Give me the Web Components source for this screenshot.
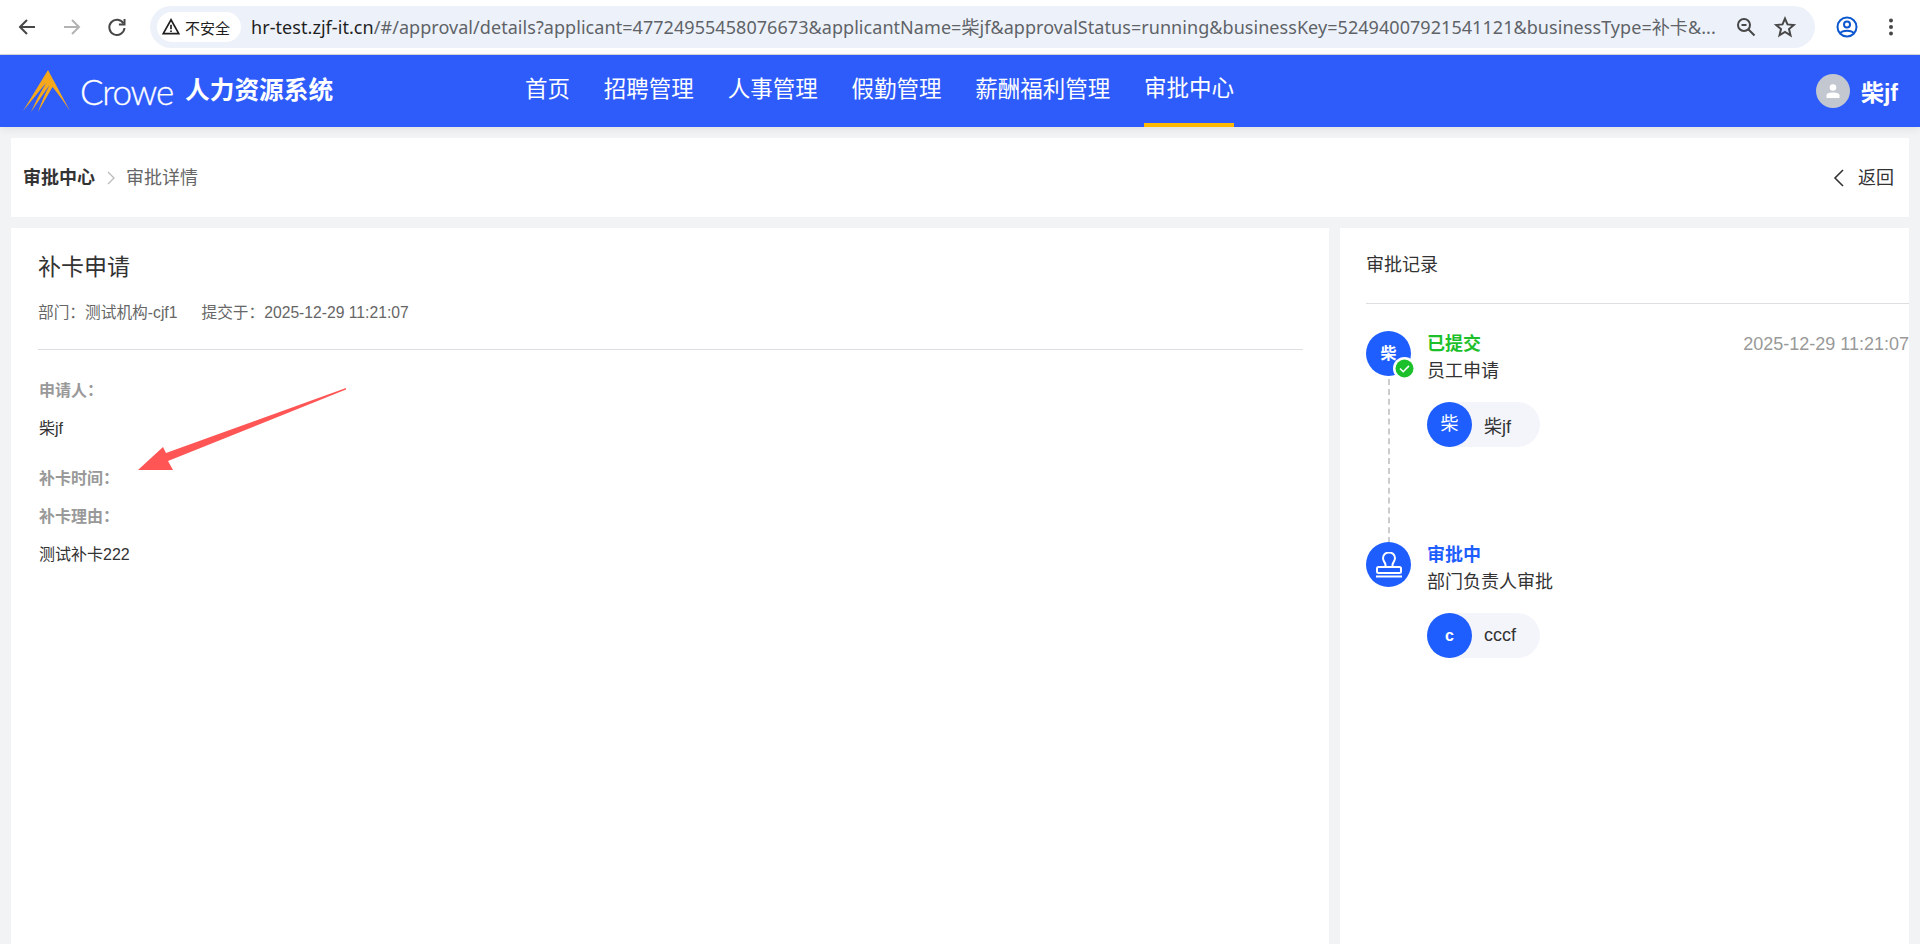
<!DOCTYPE html>
<html lang="zh-CN">
<head>
<meta charset="utf-8">
<title>审批详情</title>
<style>
  html, body { margin: 0; height: 100%; overflow: hidden; background: #f2f3f5; }
  body { font-family: "Liberation Sans", "Noto Sans CJK SC", sans-serif; color: #333; }
</style>
</head>
<body>
<browser-bar></browser-bar>
<app-header user="柴jf">
  <nav-link>首页</nav-link>
  <nav-link>招聘管理</nav-link>
  <nav-link>人事管理</nav-link>
  <nav-link>假勤管理</nav-link>
  <nav-link>薪酬福利管理</nav-link>
  <nav-link active>审批中心</nav-link>
</app-header>
<page-body>
  <crumb-bar></crumb-bar>
  <detail-card></detail-card>
  <record-panel>
    <record-step status="已提交" color="#1cc02b" text="员工申请" time="2025-12-29 11:21:07" avatar="柴" person="柴jf" done line></record-step>
    <record-step status="审批中" color="#1e5eff" text="部门负责人审批" avatar="c" person="cccf" stamp></record-step>
  </record-panel>
</page-body>

<script>
class BrowserBar extends HTMLElement {
  constructor() {
    super();
    this.shadowDOM = this.attachShadow({ mode: 'open' });
    this.shadowDOM.innerHTML = `
      <style>
        :host { display: flex; align-items: center; height: 54px; background: #fff; border-bottom: 1px solid #d5d7da; box-sizing: content-box; }
        .nav { display: flex; width: 150px; flex: none; padding-left: 15px; box-sizing: border-box; gap: 21px; }
        .nav svg { display: block; }
        .omni { display: flex; align-items: center; width: 1665px; height: 42px; border-radius: 21px; background: #edf2fa; flex: none; box-sizing: border-box; padding: 0 0 0 7px; }
        .chip { display: flex; align-items: center; gap: 4px; width: 84px; height: 30px; box-sizing: border-box; padding-left: 4px; background: #fff; border-radius: 15px; font-size: 15px; color: #1f1f1f; flex: none; }
        .url { margin-left: 10px; width: 1467px; flex: none; white-space: nowrap; overflow: hidden; font: 18px/24px "Noto Sans", "Noto Sans CJK SC", sans-serif; color: #5f6368; letter-spacing: .055px; }
        .url b { font-weight: 400; color: #1f1f1f; }
        .omni svg { display: block; flex: none; }
        .zoom { margin-left: 17px; }
        .star { margin-left: 17px; }
        .right { display: flex; align-items: center; margin-left: 20px; gap: 20px; }
      </style>
      <div class="nav">
        <svg width="24" height="24" viewBox="0 0 24 24" fill="none" stroke="#474747" stroke-width="2"><path d="M20 12H5M12 5l-7 7 7 7"/></svg>
        <svg width="24" height="24" viewBox="0 0 24 24" fill="none" stroke="#b3b3b3" stroke-width="2"><path d="M4 12h15M12 5l7 7-7 7"/></svg>
        <svg width="24" height="24" viewBox="0 0 24 24" fill="none" stroke="#474747" stroke-width="2"><path d="M18.5 8.5A7.6 7.6 0 1 0 19.5 13"/><path d="M19.5 4v5.6h-5.6" /></svg>
      </div>
      <div class="omni">
        <div class="chip">
          <svg width="20" height="20" viewBox="0 0 18 18" fill="none" stroke="#1f1f1f" stroke-width="1.5"><path d="M9 2.5 16 15H2z"/><path d="M9 7v4M9 12.2v1.4"/></svg>
          <span>不安全</span>
        </div>
        <div class="url"><b>hr-test.zjf-it.cn</b>/#/approval/details?applicant=47724955458076673&amp;applicantName=柴jf&amp;approvalStatus=running&amp;businessKey=52494007921541121&amp;businessType=补卡&amp;...</div>
        <svg class="zoom" width="22" height="22" viewBox="0 0 22 22" fill="none" stroke="#474747" stroke-width="2"><circle cx="9" cy="9" r="6"/><path d="M6.5 9h5M13.5 13.5l6 6"/></svg>
        <svg class="star" width="22" height="22" viewBox="0 0 22 22" fill="none" stroke="#474747" stroke-width="2"><path d="M11 2.6l2.5 5.8 6.3.6-4.8 4.1 1.5 6.2-5.5-3.3-5.5 3.3L7 13.1 2.2 9l6.3-.6z"/></svg>
      </div>
      <div class="right">
        <svg width="24" height="24" viewBox="0 0 24 24" fill="none" stroke="#0b57d0" stroke-width="2"><circle cx="12" cy="12" r="9.5"/><circle cx="12" cy="9.5" r="3"/><path d="M5.5 18c2-3 11-3 13 0"/></svg>
        <svg width="24" height="24" viewBox="0 0 24 24" fill="#474747"><circle cx="12" cy="5.5" r="2"/><circle cx="12" cy="12" r="2"/><circle cx="12" cy="18.5" r="2"/></svg>
      </div>`;
  }
}
customElements.define('browser-bar', BrowserBar);

class AppHeader extends HTMLElement {
  constructor() {
    super();
    this.shadowDOM = this.attachShadow({ mode: 'open' });
  }

  connectedCallback() {
    this.shadowDOM.innerHTML = `
      <style>
        :host { display: flex; align-items: stretch; height: 72px; background: #2e5cfb; color: #fff; position: relative; z-index: 1; box-shadow: 0 2px 8px rgba(0,0,0,.08); }
        .brand { display: flex; align-items: center; width: 525px; flex: none; box-sizing: border-box; padding-left: 23px; }
        .brand svg { display: block; flex: none; }
        .crowe { margin-left: 9px; font: 300 35px/44px Lato, sans-serif; letter-spacing: -1.2px; color: #fff; -webkit-text-stroke: .3px #fff; }
        .name { margin-left: 12px; font-size: 24.7px; line-height: 32px; font-weight: 700; white-space: nowrap; }
        nav { display: flex; gap: 33.8px; flex: 1; }
        .user { display: flex; align-items: center; padding-right: 22px; gap: 11px; font-size: 23px; font-weight: 700; }
        .face { width: 34px; height: 34px; border-radius: 50%; background: #c2c7d0; display: flex; align-items: center; justify-content: center; }
        .face svg { display: block; }
      </style>
      <div class="brand">
        <svg width="48" height="44" viewBox="23 69 48 44"><path fill="#f5a81c" d="M48 70 70 111Q60 96 52.500 87L38 112Q42 100 49.500 85L31 112Q37 98 46 83L23 111Z"/></svg>
        <span class="crowe">Crowe</span>
        <span class="name">人力资源系统</span>
      </div>
      <nav><slot></slot></nav>
      <div class="user">
        <div class="face"><svg width="16" height="16" viewBox="0 0 16 16" fill="#fff"><circle cx="8" cy="4.500" r="3.300"/><path d="M1.500 15v-2.500c0-2 2-3 6.500-3s6.500 1 6.500 3V15z"/></svg></div>
        <span>${this.getAttribute('user')}</span>
      </div>`;
  }
}
customElements.define('app-header', AppHeader);

class NavLink extends HTMLElement {
  constructor() {
    super();
    this.shadowDOM = this.attachShadow({ mode: 'open' });
    this.shadowDOM.innerHTML = `
      <style>
        :host { display: block; box-sizing: border-box; height: 72px; font-size: 22.500px; line-height: 70px; color: #fff; white-space: nowrap; }
        :host([active]) { border-bottom: 4px solid #ffb900; line-height: 68px; }
      </style>
      <slot></slot>`;
  }
}
customElements.define('nav-link', NavLink);

class PageBody extends HTMLElement {
  constructor() {
    super();
    this.shadowDOM = this.attachShadow({ mode: 'open' });
    this.shadowDOM.innerHTML = `
      <style>
        :host { display: grid; grid-template-columns: 1318px 569px; grid-template-rows: 79px 1fr; gap: 11px 11px; padding: 11px 11px 0 11px; height: 817px; box-sizing: border-box; }
        ::slotted(crumb-bar) { grid-column: 1 / 3; }
      </style>
      <slot></slot>`;
  }
}
customElements.define('page-body', PageBody);

class CrumbBar extends HTMLElement {
  constructor() {
    super();
    this.shadowDOM = this.attachShadow({ mode: 'open' });
    this.shadowDOM.innerHTML = `
      <style>
        :host { display: flex; align-items: center; background: #fff; padding: 0 15px 0 12px; font-size: 18px; line-height: 24px; }
        b { color: #333; }
        .sep { display: block; margin: 0 11px 0 12px; }
        .cur { color: #666; }
        .back { margin-left: auto; display: flex; align-items: center; gap: 14px; color: #333; }
        .back svg { display: block; }
      </style>
      <b>审批中心</b>
      <svg class="sep" width="8" height="14" viewBox="0 0 8 14" fill="none" stroke="#bbb" stroke-width="1.300"><path d="M1 1l6 6-6 6"/></svg>
      <span class="cur">审批详情</span>
      <div class="back">
        <svg width="12" height="20" viewBox="0 0 12 20" fill="none" stroke="#333" stroke-width="1.600"><path d="M11 2 3 10l8 8"/></svg>
        <span>返回</span>
      </div>`;
  }
}
customElements.define('crumb-bar', CrumbBar);

class DetailCard extends HTMLElement {
  constructor() {
    super();
    this.shadowDOM = this.attachShadow({ mode: 'open' });
    this.shadowDOM.innerHTML = `
      <style>
        :host { display: block; position: relative; background: #fff; padding: 24px 26px 0 27px; }
        h1 { margin: 0; font-size: 23px; line-height: 30px; font-weight: 400; color: #333; }
        .meta { display: flex; gap: 24px; margin-top: 21px; font-size: 15.700px; line-height: 20px; color: #666; }
        hr { margin: 26px 0 31px; border: 0; border-top: 1px solid #dcdee2; }
        dl { margin: 0 0 0 1px; font-size: 16px; line-height: 20px; }
        dt { font-weight: 700; color: #999; }
        dd { margin: 18px 0 0; color: #333; }
        dd + dt { margin-top: 30px; }
        dt + dt { margin-top: 18px; }
        .arrow { position: absolute; left: 127px; top: 160px; }
      </style>
      <h1>补卡申请</h1>
      <div class="meta"><span>部门：测试机构-cjf1</span><span>提交于：2025-12-29 11:21:07</span></div>
      <hr>
      <dl>
        <dt>申请人：</dt><dd>柴jf</dd>
        <dt>补卡时间：</dt>
        <dt>补卡理由：</dt><dd>测试补卡222</dd>
      </dl>
      <svg class="arrow" width="212" height="86" viewBox="0 0 212 86"><path fill="#ff5555" d="M208 0 28 65 25 59 0 82H35L30 73 208 1.500Z"/></svg>`;
  }
}
customElements.define('detail-card', DetailCard);

class RecordPanel extends HTMLElement {
  constructor() {
    super();
    this.shadowDOM = this.attachShadow({ mode: 'open' });
    this.shadowDOM.innerHTML = `
      <style>
        :host { display: block; background: #fff; padding: 0 0 0 26px; }
        h2 { margin: 0; padding: 25px 0 26px; font-size: 18px; line-height: 24px; font-weight: 400; color: #333; border-bottom: 1px solid #dcdee2; }
        .list { padding-top: 27px; }
      </style>
      <h2>审批记录</h2>
      <div class="list"><slot></slot></div>`;
  }
}
customElements.define('record-panel', RecordPanel);

class RecordStep extends HTMLElement {
  constructor() {
    super();
    this.shadowDOM = this.attachShadow({ mode: 'open' });
  }

  connectedCallback() {
    const a = (n) => this.getAttribute(n) || '';
    const badge = this.hasAttribute('done') ? `
      <svg class="badge" width="23" height="23" viewBox="0 0 23 23"><circle cx="11.500" cy="11.500" r="11.500" fill="#fff"/><circle cx="11.500" cy="11.500" r="9" fill="#1cc02b"/><path d="M7 11.500l3.200 3.200 5.800-5.800" fill="none" stroke="#fff" stroke-width="1.500"/></svg>` : '';
    const inner = this.hasAttribute('stamp') ? `
      <svg width="28" height="26" viewBox="0 0 28 26" fill="none" stroke="#fff" stroke-width="2"><path d="M10.500 15v-2c0-2.500-2.500-3.500-2.500-7a6 5.500 0 0 1 12 0c0 3.500-2.500 4.500-2.500 7v2"/><rect x="2" y="15" width="24" height="6" rx="1.500"/><path d="M1 24.500h26"/></svg>` : a('avatar');
    this.shadowDOM.innerHTML = `
      <style>
        :host { display: grid; grid-template-columns: 45px 1fr; column-gap: 16px; height: 211px; position: relative; font-size: 18px; }
        :host(:last-child) { height: auto; }
        .av { position: relative; z-index: 1; width: 45px; height: 45px; border-radius: 50%; background: #1e5eff; color: #fff; font-size: 16px; font-weight: 700; line-height: 45px; text-align: center; display: flex; align-items: center; justify-content: center; }
        .badge { position: absolute; left: 27px; top: 26px; }
        .line { position: absolute; left: 22px; top: 48px; height: 164px; border-left: 2px dashed #ccc; }
        .head { display: flex; justify-content: space-between; line-height: 24px; margin-top: 1px; }
        .st { font-weight: 700; }
        .time { color: #999; }
        .txt { line-height: 24px; margin-top: 3px; color: #333; }
        .chip { display: flex; align-items: center; width: 113px; height: 45px; margin-top: 19px; border-radius: 23px; background: #f4f5fb; }
        .chip i { width: 45px; height: 45px; border-radius: 50%; background: #1e5eff; color: #fff; font-style: normal; font-size: 18px; line-height: 45px; text-align: center; flex: none; }
        .chip i.lat { font-size: 16px; font-weight: 700; }
        .chip span { margin-left: 12px; color: #333; }
      </style>
      <div class="av">${inner}${badge}</div>
      ${this.hasAttribute('line') ? '<div class="line"></div>' : ''}
      <div>
        <div class="head"><span class="st" style="color:${a('color')}">${a('status')}</span><span class="time">${a('time')}</span></div>
        <div class="txt">${a('text')}</div>
        <div class="chip"><i class="${a('avatar') === 'c' ? 'lat' : ''}">${a('avatar')}</i><span>${a('person')}</span></div>
      </div>`;
  }
}
customElements.define('record-step', RecordStep);
</script>
</body>
</html>
